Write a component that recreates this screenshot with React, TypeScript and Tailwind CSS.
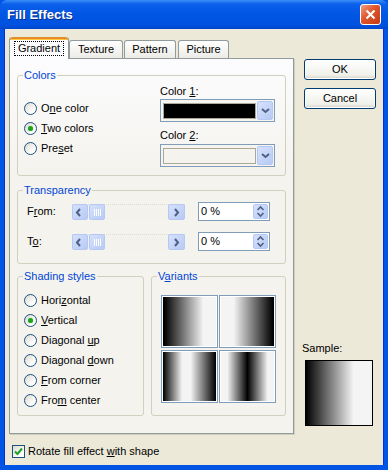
import type { ReactNode } from 'react';

const Radio = ({ checked }: { checked?: boolean }) => (
  <span className="flex h-[13px] w-[13px] shrink-0 items-center justify-center rounded-full border border-[#1C5180] bg-[linear-gradient(135deg,#DCD9CE,#FFFFFF_75%)]">
    {checked && <span className="h-[5px] w-[5px] rounded-full bg-[#21A121] shadow-[0_0_1px_#5fd35f]" />}
  </span>
);

const RadioRow = ({ checked, children }: { checked?: boolean; children: ReactNode }) => (
  <div className="flex h-[20px] items-center gap-[4px]">
    <Radio checked={checked} />
    <span>{children}</span>
  </div>
);

const Group = ({
  title,
  className,
  children,
}: {
  title: ReactNode;
  className: string;
  children: ReactNode;
}) => (
  <fieldset className={`rounded-[3px] border border-[#D0D0BF] ${className}`}>
    <legend className="ml-[5px] px-[1px] leading-[13px] text-[#0046D5]">{title}</legend>
    {children}
  </fieldset>
);

const Chevron = ({ dir }: { dir: 'left' | 'right' | 'down' }) => {
  const pts =
    dir === 'left' ? '6,3 3,6.5 6,10' : dir === 'right' ? '5,3 8,6.5 5,10' : '3,5 6.5,8 10,5';
  return (
    <svg width="13" height="13" viewBox="0 0 13 13">
      <polyline points={pts} fill="none" stroke="#4D6185" strokeWidth="2" />
    </svg>
  );
};

const BlueButton = ({ children, className = '' }: { children?: ReactNode; className?: string }) => (
  <span
    className={`flex items-center justify-center rounded-[2px] border border-[#B4C8F6] bg-[linear-gradient(135deg,#D6E1FB,#B7CAF5)] ${className}`}
  >
    {children}
  </span>
);

const ColorCombo = ({ fill }: { fill: string }) => (
  <div className="flex h-[23px] w-[115px] items-center border border-[#7F9DB9] bg-[#F5F4EF] pl-[2px] pr-[1px]">
    <span className={`h-[16px] w-[93px] border border-[#ACA899] ${fill}`} />
    <BlueButton className="ml-auto h-[19px] w-[16px]">
      <Chevron dir="down" />
    </BlueButton>
  </div>
);

const Slider = () => (
  <div className="flex h-[16px] w-[113px] items-center bg-[#F3F2EC] border-t border-dotted border-[#DDDCD2]">
    <BlueButton className="h-[16px] w-[16px]">
      <Chevron dir="left" />
    </BlueButton>
    <BlueButton className="ml-[1px] h-[16px] w-[16px]">
      <span className="flex gap-[1px]">
        <span className="h-[7px] w-px bg-white" />
        <span className="h-[7px] w-px bg-white" />
        <span className="h-[7px] w-px bg-white" />
        <span className="h-[7px] w-px bg-white" />
      </span>
    </BlueButton>
    <BlueButton className="ml-auto h-[16px] w-[17px]">
      <Chevron dir="right" />
    </BlueButton>
  </div>
);

const Spin = () => (
  <div className="flex h-[19px] w-[72px] items-center border border-[#7F9DB9] bg-white pl-[2px] pr-[1px]">
    <span>0 %</span>
    <BlueButton className="ml-auto h-[15px] w-[15px] flex-col">
      <svg width="9" height="13" viewBox="0 0 9 13">
        <polyline points="1.5,5 4.5,2 7.5,5" fill="none" stroke="#4D6185" strokeWidth="1.6" />
        <polyline points="1.5,8 4.5,11 7.5,8" fill="none" stroke="#4D6185" strokeWidth="1.6" />
      </svg>
    </BlueButton>
  </div>
);

const Tile = ({ bg }: { bg: string }) => (
  <div className="h-[53px] w-[57px] border border-[#7F9DB9] bg-white p-px">
    <div className={`h-full w-full ${bg}`} />
  </div>
);

const XpButton = ({ children }: { children: ReactNode }) => (
  <button className="flex h-[21px] w-[72px] items-center justify-center rounded-[3px] border border-[#003C74] bg-[linear-gradient(to_bottom,#FFFFFF,#F0F0EA_80%,#D6D0C5)] shadow-[inset_0_0_0_1px_#fff]">
    {children}
  </button>
);

export default function App() {
  return (
    <div className="flex h-[470px] w-[388px] flex-col bg-[#0055E5] font-['Liberation_Sans',Arial,sans-serif] text-[11px] leading-[13px] text-black">
      {/* title bar */}
      <div className="flex h-[29px] shrink-0 items-center rounded-t-[7px] bg-[linear-gradient(to_bottom,#3C8EF7_0%,#0A60EA_14%,#0056E4_50%,#0052DF_85%,#0046CE_100%)] pl-[7px] pr-[7px]">
        <span className="text-[13px] font-bold text-white [text-shadow:1px_1px_0_#0A2C8C]">Fill Effects</span>
        <span className="ml-auto flex h-[21px] w-[21px] items-center justify-center rounded-[3px] border border-white bg-[linear-gradient(135deg,#F0A080,#E0542A_45%,#C43A14)]">
          <svg width="11" height="11" viewBox="0 0 11 11">
            <line x1="1.5" y1="1.5" x2="9.5" y2="9.5" stroke="white" strokeWidth="2.2" />
            <line x1="9.5" y1="1.5" x2="1.5" y2="9.5" stroke="white" strokeWidth="2.2" />
          </svg>
        </span>
      </div>

      {/* body */}
      <div className="mx-[4px] mb-[5px] flex flex-1 border-x border-[#0831D9] bg-[#ECE9D8]">
        <div className="ml-[4px] flex w-[285px] flex-col pt-[8px]">
          {/* tabs */}
          <div className="flex h-[21px] items-end">
            <div className="relative z-10 -mb-px flex h-[22px] w-[60px] flex-col rounded-t-[3px] border-x border-[#919B9C] bg-[#FCFCFE]">
              <div className="h-[3px] rounded-t-[3px] border-t-2 border-[#E68B2C] bg-[#FFC83C]" />
              <div className="flex flex-1 items-start justify-center pt-[1px]">
                <span className="border border-dotted border-black px-[3px] leading-[13px]">Gradient</span>
              </div>
            </div>
            {[
              ['Texture', 'w-[54px]'],
              ['Pattern', 'ml-px w-[52px]'],
              ['Picture', 'ml-[2px] w-[51px]'],
            ].map(([t, w]) => (
              <div
                key={t}
                className={`flex h-[18px] items-center justify-center rounded-t-[3px] border border-b-0 border-[#919B9C] bg-[linear-gradient(to_bottom,#FFFFFF,#ECEBE6)] ${w}`}
              >
                {t}
              </div>
            ))}
          </div>

          {/* panel */}
          <div className="flex h-[376px] flex-col border border-[#919B9C] bg-[linear-gradient(to_bottom,#FCFCFE,#F4F3EE_30%)] pl-[7px] pt-[10px] shadow-[1px_1px_0_#D0CEBF]">
            <Group title="Colors" className="h-[107px] w-[269px]">
              <div className="flex">
                <div className="w-[142px] pl-[6px] pt-[16px]">
                  <RadioRow>
                    O<u>n</u>e color
                  </RadioRow>
                  <RadioRow checked>
                    <u>T</u>wo colors
                  </RadioRow>
                  <RadioRow>
                    Pre<u>s</u>et
                  </RadioRow>
                </div>
                <div className="flex flex-col pt-[3px]">
                  <span className="h-[13px]">
                    Color <u>1</u>:
                  </span>
                  <div className="mt-[1px]">
                    <ColorCombo fill="bg-black" />
                  </div>
                  <span className="mt-[7px] h-[13px]">
                    Color <u>2</u>:
                  </span>
                  <div className="mt-[2px]">
                    <ColorCombo fill="bg-[#F4F3EE]" />
                  </div>
                </div>
              </div>
            </Group>

            <Group title="Transparency" className="mt-[8px] h-[80px] w-[269px]">
              <div className="flex flex-col gap-[9px] pl-[9px] pt-[4px]">
                {[
                  <>
                    F<u>r</u>om:
                  </>,
                  <>
                    T<u>o</u>:
                  </>,
                ].map((l, i) => (
                  <div key={i} className="flex h-[21px] items-center">
                    <span className="w-[45px]">{l}</span>
                    <Slider />
                    <div className="ml-[13px]">
                      <Spin />
                    </div>
                  </div>
                ))}
              </div>
            </Group>

            <div className="mt-[6px] flex gap-[7px]">
              <Group title="Shading styles" className="h-[146px] w-[127px]">
                <div className="pl-[6px] pt-[7px]">
                  <RadioRow>
                    Hori<u>z</u>ontal
                  </RadioRow>
                  <RadioRow checked>
                    <u>V</u>ertical
                  </RadioRow>
                  <RadioRow>
                    Diagonal <u>u</u>p
                  </RadioRow>
                  <RadioRow>
                    Diagonal <u>d</u>own
                  </RadioRow>
                  <RadioRow>
                    <u>F</u>rom corner
                  </RadioRow>
                  <RadioRow>
                    Fro<u>m</u> center
                  </RadioRow>
                </div>
              </Group>
              <Group
                title={
                  <>
                    V<u>a</u>riants
                  </>
                }
                className="h-[146px] w-[135px]"
              >
                <div className="grid grid-cols-[57px_57px] gap-x-px gap-y-[2px] pl-[9px] pt-[12px]">
                  <Tile bg="bg-[linear-gradient(to_right,#000_2%,#F4F4F4_76%)]" />
                  <Tile bg="bg-[linear-gradient(to_right,#F4F4F4_24%,#000_98%)]" />
                  <Tile bg="bg-[linear-gradient(to_right,#000_0%,#F4F4F4_36%,#F4F4F4_52%,#000_100%)]" />
                  <Tile bg="bg-[linear-gradient(to_right,#F4F4F4_12%,#000_50%,#F4F4F4_88%)]" />
                </div>
              </Group>
            </div>
          </div>

          {/* checkbox */}
          <div className="ml-[3px] mt-[11px] flex items-center gap-[3px]">
            <span className="flex h-[13px] w-[13px] items-center justify-center border border-[#1C5180] bg-[linear-gradient(135deg,#DCD9CE,#FFFFFF_75%)]">
              <svg width="9" height="9" viewBox="0 0 9 9">
                <polyline points="1,4.5 3.5,7 8,1.5" fill="none" stroke="#21A121" strokeWidth="2" />
              </svg>
            </span>
            <span>
              Rotate fill effect <u>w</u>ith shape
            </span>
          </div>
        </div>

        {/* right column */}
        <div className="ml-[8px] flex w-[76px] flex-col pt-[30px]">
          <div className="ml-[2px] flex flex-col gap-[8px]">
            <XpButton>OK</XpButton>
            <XpButton>Cancel</XpButton>
          </div>
          <span className="mt-[233px] h-[13px]">Sample:</span>
          <div className="ml-[3px] mt-[5px] h-[66px] w-[68px] border border-black bg-[linear-gradient(to_right,#000_0%,#F4F4F4_72%)]" />
        </div>
      </div>
    </div>
  );
}
